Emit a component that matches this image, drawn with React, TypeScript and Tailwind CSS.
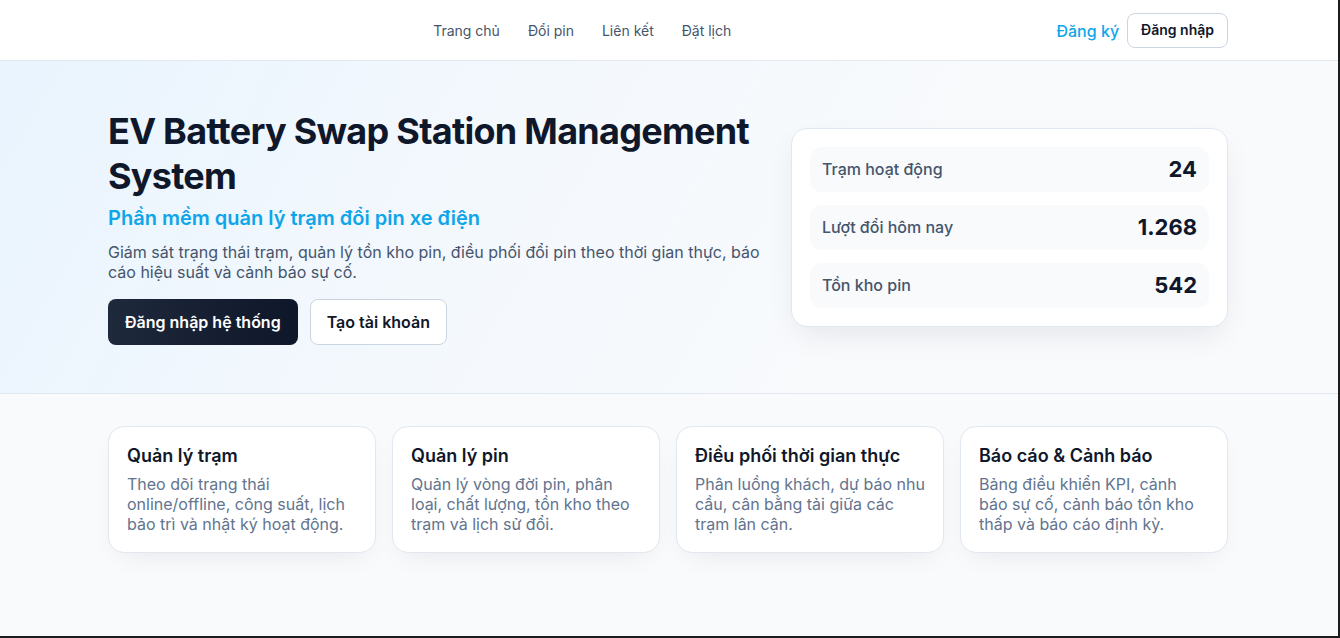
import React from "react";

const stats = [
  { label: "Trạm hoạt động", value: "24" },
  { label: "Lượt đổi hôm nay", value: "1.268" },
  { label: "Tồn kho pin", value: "542" },
];

const features = [
  {
    title: "Quản lý trạm",
    desc: "Theo dõi trạng thái online/offline, công suất, lịch bảo trì và nhật ký hoạt động.",
  },
  {
    title: "Quản lý pin",
    desc: "Quản lý vòng đời pin, phân loại, chất lượng, tồn kho theo trạm và lịch sử đổi.",
  },
  {
    title: "Điều phối thời gian thực",
    desc: "Phân luồng khách, dự báo nhu cầu, cân bằng tải giữa các trạm lân cận.",
  },
  {
    title: "Báo cáo & Cảnh báo",
    desc: "Bảng điều khiển KPI, cảnh báo sự cố, cảnh báo tồn kho thấp và báo cáo định kỳ.",
  },
];

export default function App() {
  return (
    <div
      className="h-[638px] overflow-hidden border-r-2 border-b-2 border-[#1c1c1c] bg-[#f8fafc] text-slate-900"
      style={{ fontFamily: "Inter, 'Noto Sans', sans-serif" }}
    >
      {/* Header */}
      <header className="h-[61px] border-b border-slate-200 bg-white">
        <div className="ml-[108px] flex h-[60px] w-[1120px] items-center justify-between">
          <div />
          <nav className="mt-[2px] flex items-center gap-7 text-sm text-slate-600">
            <a>Trang chủ</a>
            <a>Đổi pin</a>
            <a>Liên kết</a>
            <a>Đặt lịch</a>
          </nav>
          <div className="flex items-center gap-2">
            <a className="mt-[1px] text-base font-medium text-[#0ea5e9]">Đăng ký</a>
            <button className="h-[35px] rounded-lg border border-slate-300 bg-white px-[13px] text-sm font-semibold text-slate-900">
              Đăng nhập
            </button>
          </div>
        </div>
      </header>

      {/* Hero */}
      <section className="border-b border-slate-200 bg-[linear-gradient(120deg,#e9f4fe_0%,#f3f8fd_35%,#f8fafc_65%,#f8fafc_100%)]">
        <div className="ml-[108px] grid h-[332px] w-[1120px] grid-cols-[662px_437px] items-center gap-[21px]">
          <div>
            <h1 className="text-[36px] font-bold leading-[45px] tracking-[-0.02em] text-slate-900">
              EV Battery Swap Station Management System
            </h1>
            <p className="mt-[5px] text-[20px] font-semibold leading-7 text-[#0ea5e9]">
              Phần mềm quản lý trạm đổi pin xe điện
            </p>
            <p className="mt-[10px] text-base leading-5 text-slate-600">
              Giám sát trạng thái trạm, quản lý tồn kho pin, điều phối đổi pin theo thời gian thực, báo cáo hiệu suất và cảnh báo sự cố.
            </p>
            <div className="mt-[17px] flex gap-3">
              <button className="h-[46px] rounded-lg bg-gradient-to-r from-[#1e293b] to-[#0f172a] px-[17px] text-base font-semibold text-white">
                Đăng nhập hệ thống
              </button>
              <button className="h-[46px] rounded-lg border border-slate-300 bg-white px-4 text-base font-semibold text-slate-900">
                Tạo tài khoản
              </button>
            </div>
          </div>
          <div>
            <div className="flex flex-col gap-[13px] rounded-2xl border border-slate-200 bg-white p-[18px] shadow-[0_12px_32px_-8px_rgba(15,23,42,0.10)]">
              {stats.map((s) => (
                <div
                  key={s.label}
                  className="flex h-[45px] items-center justify-between rounded-xl bg-[#f8fafc] px-3"
                >
                  <span className="text-base font-medium text-slate-600">{s.label}</span>
                  <span className="text-[22px] font-bold text-slate-900">{s.value}</span>
                </div>
              ))}
            </div>
          </div>
        </div>
      </section>

      {/* Features */}
      <section className="pt-8">
        <div className="ml-[108px] grid w-[1120px] grid-cols-4 gap-4">
          {features.map((f) => (
            <div
              key={f.title}
              className="rounded-2xl border border-slate-200 bg-white px-[18px] pt-[15px] pb-[18px] shadow-[0_10px_28px_-12px_rgba(15,23,42,0.10)]"
            >
              <h3 className="text-lg font-semibold leading-7 text-slate-900">{f.title}</h3>
              <p className="mt-1 text-base leading-5 text-slate-500">{f.desc}</p>
            </div>
          ))}
        </div>
      </section>
    </div>
  );
}
